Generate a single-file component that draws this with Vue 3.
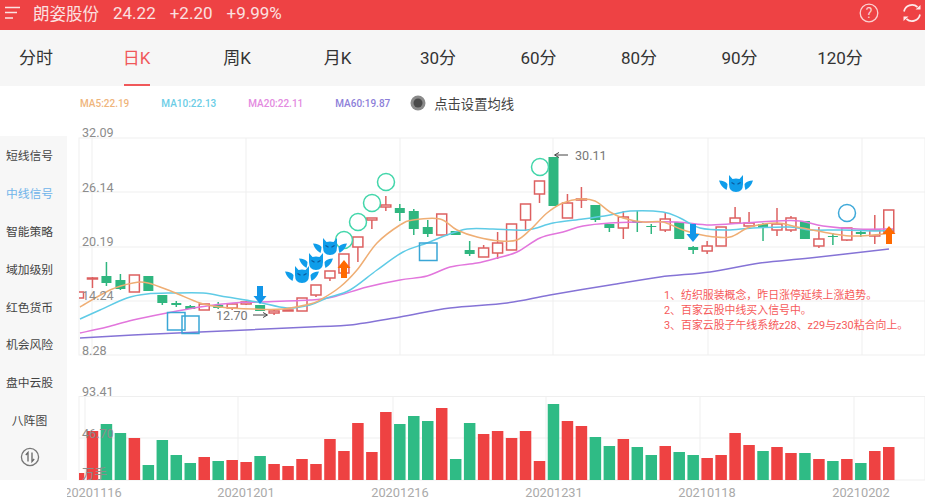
<template>
  <div class="page">
    <header class="topbar">
      <svg class="menu-icon" width="16" height="14" viewBox="0 0 16 14">
        <path d="M0 1.5h15M0 6.500h12M0 12h8" stroke="#fbe3e3" stroke-width="1.5" fill="none" />
      </svg>
      <span class="stock-name">朗姿股份</span>
      <span class="quote">24.22</span>
      <span class="quote">+2.20</span>
      <span class="quote">+9.99%</span>
      <div class="top-icons">
        <svg width="20" height="20" viewBox="0 0 20 20">
          <circle cx="10" cy="10" r="8.800" stroke="#fbd0d0" stroke-width="1.3" fill="none" />
          <text x="10" y="15" text-anchor="middle" class="help-mark">?</text>
        </svg>
        <svg width="20" height="20" viewBox="0 0 20 20">
          <path d="M2 8.500A8.200 8.200 0 0 1 15.500 4M18 11.500A8.200 8.200 0 0 1 4.500 16" stroke="#fdeaea" stroke-width="1.7" fill="none" />
          <path d="M13.500 6.500h5V2zM6.500 13.500h-5V18z" fill="#fdeaea" />
        </svg>
      </div>
    </header>

    <nav class="tabs">
      <div v-for="t in tabs" :key="t" class="tab" :class="{ active: t === '日K' }">{{ t }}</div>
    </nav>

    <div class="body">
      <aside class="side">
        <div v-for="s in sideItems" :key="s" class="side-item" :class="{ on: s === '中线信号' }">{{ s }}</div>
        <div class="side-item">
          <svg width="20" height="20" viewBox="0 0 20 20">
            <circle cx="10" cy="10" r="8.600" stroke="#777" stroke-width="1.300" fill="none" />
            <path d="M5.800 8 8 5.500V14.500M12 5.500V14.500L14.200 12" stroke="#666" stroke-width="1.300" fill="none" />
          </svg>
        </div>
      </aside>

      <main class="main">
        <div class="legend">
          <span v-for="m in maLegend" :key="m.text" class="ma" :style="{ color: m.color }">{{ m.text }}</span>
          <div class="ma-set">
            <svg width="16" height="16" viewBox="0 0 16 16">
              <circle cx="8" cy="8" r="7.500" fill="#8a8a8a" />
              <circle cx="8" cy="8" r="4.500" fill="#4a4a4a" />
            </svg>
            <span>点击设置均线</span>
          </div>
        </div>

        <svg class="chart" width="858" height="374" viewBox="67 126 858 374">
          <defs>
            <clipPath id="plot"><rect x="79" y="126" width="846" height="374" /></clipPath>
            <g id="devil">
              <path d="M-7-9-3.500-5Q0-6 3.500-5L7-9 7 0Q7 8 0 8-7 8-7 0Z" fill="#0f9dea" />
              <path d="M-8.500 0Q-11-3.500-17-3.500-15 3-9.500 6-8.500 3-8.500 0ZM8.500 0Q11-3.500 17-3.500 15 3 9.500 6 8.500 3 8.500 0Z" fill="#0f9dea" />
              <path d="M-4.500-1.500-1.500 0.300M4.500-1.500 1.500 0.300" stroke="#0c5a9c" stroke-width="1.200" />
            </g>
          </defs>

          <!-- grid -->
          <g class="grid">
            <rect x="79" y="138" width="846" height="217" />
            <line v-for="y in [192, 247, 301]" :key="y" x1="79" x2="925" :y1="y" :y2="y" />
            <line v-for="x in [92, 246, 400, 553, 708, 862]" :key="x" :x1="x" :x2="x" y1="138" y2="355" />
            <rect x="79" y="396.500" width="846" height="83.500" />
            <line x1="79" x2="925" y1="438" y2="438" />
            <line v-for="x in [85, 238, 393, 546, 700, 854]" :key="'v' + x" :x1="x" :x2="x" y1="396" y2="480" />
          </g>

          <!-- candles -->
          <g clip-path="url(#plot)">
            <g v-for="c in candles" :key="c.x">
              <line :x1="c.x" :x2="c.x" :y1="c.wt" :y2="c.wb" :stroke="c.up ? '#dd6060' : '#2fb67f'" stroke-width="1.5" />
              <rect v-if="c.up" :x="c.x - 5" :y="c.top" width="10" :height="c.h" class="up" />
              <rect v-else :x="c.x - 5" :y="c.top" width="10" :height="c.h" fill="#2fb67f" />
            </g>
            <rect v-for="b in bars" :key="'b' + b.x" :x="b.x" :y="480 - b.h" width="11.500" :height="b.h" :fill="b.up ? '#ee4242' : '#2fbb85'" />
          </g>

          <!-- moving averages -->
          <path v-for="l in maLines" :key="l.color" :d="l.d" :stroke="l.color" class="ma-line" />

          <!-- signals -->
          <circle v-for="p in greenRings" :key="p[0]" :cx="p[0]" :cy="p[1]" r="8.500" class="ring" />
          <circle cx="847" cy="213" r="8.500" class="ring blue" />
          <rect x="167.500" y="312.500" width="17.500" height="17.500" class="box" />
          <rect x="182" y="316" width="17" height="17.500" class="box" />
          <rect x="419.500" y="243" width="17.500" height="17.500" class="box" />
          <path v-for="a in downArrows" :key="a" :transform="`translate(${a[0]} ${a[1]})`" d="M-3 0H3V10H6.500L0 18-6.500 10H-3Z" fill="#1296e8" />
          <path v-for="a in upArrows" :key="a" :transform="`translate(${a[0]} ${a[1]})`" d="M-3 18H3V8H6.500L0 0-6.500 8H-3Z" fill="#ff6a00" />
          <use v-for="d in devils" :key="d[0]" href="#devil" :x="d[0]" :y="d[1]" />

          <!-- price marks -->
          <text x="216" y="320" class="axis dark">12.70</text>
          <path d="M253 315H267M263 312.500 267.500 315 263 317.500" class="pointer" />
          <path d="M555 155H568M559 152.500 554.500 155 559 157.500" class="pointer" />
          <text x="575" y="160" class="axis dark">30.11</text>

          <!-- axis labels -->
          <text v-for="a in axisLabels" :key="a[0]" x="82" :y="a[1]" class="axis">{{ a[0] }}</text>
          <text v-for="d in dates" :key="d[0]" :x="d[1]" y="497" text-anchor="middle" class="date">{{ d[0] }}</text>

          <!-- note -->
          <text v-for="n in notes" :key="n[0]" x="664" :y="n[1]" class="note">{{ n[0] }}</text>
        </svg>
      </main>
    </div>
  </div>
</template>

<script setup>
const tabs = ['分时', '日K', '周K', '月K', '30分', '60分', '80分', '90分', '120分']
const sideItems = ['短线信号', '中线信号', '智能策略', '域加级别', '红色货币', '机会风险', '盘中云股', '八阵图']

const maLegend = [
  { text: 'MA5:22.19', color: '#efb57c' },
  { text: 'MA10:22.13', color: '#6bcde6' },
  { text: 'MA20:22.11', color: '#e38ae0' },
  { text: 'MA60:19.87', color: '#8d80d9' }
]

const axisLabels = [['32.09', 137], ['26.14', 192], ['20.19', 246], ['14.24', 300], ['8.28', 355], ['93.41', 396], ['46.70', 438], ['万手', 478]]
const dates = [['20201116', 93], ['20201201', 246], ['20201216', 400], ['20201231', 554], ['20210118', 707], ['20210202', 861]]
const notes = [
  ['1、纺织服装概念\uFF0C昨日涨停延续上涨趋势。', 299],
  ['2、百家云股中线买入信号中。', 314],
  ['3、百家云股子午线系统z28、z29与z30粘合向上。', 329]
]

const greenRings = [[344, 240], [358, 222], [372, 203], [386, 182], [540, 167]]
const downArrows = [[260, 286], [693, 224]]
const upArrows = [[344, 260], [889, 226]]
const devils = [[302, 275], [316, 262], [330, 247], [736, 184]]

// top, bottom, wick top, wick bottom, u = red / d = green
const candleRows = [
  [292, 298, 292, 298, 'u'], [278, 279, 277, 288, 'u'], [276, 283, 262, 286, 'd'], [280, 289, 274, 290, 'd'],
  [275, 292, 275, 292, 'u'], [276, 291, 276, 291, 'd'], [295, 303, 295, 305, 'd'], [303, 305, 301, 307, 'd'],
  [306, 309, 305, 309, 'd'], [304, 310, 304, 310, 'u'], [305, 308, 302, 309, 'd'], [304, 308, 303, 310, 'u'],
  [302, 304, 301, 305, 'u'], [305, 311, 305, 311, 'd'], [311, 313, 309, 315, 'u'], [310, 311, 310, 311, 'u'],
  [298, 311, 298, 311, 'u'], [285, 295, 285, 297, 'u'], [271, 278, 271, 281, 'u'], [254, 273, 254, 273, 'u'],
  [237, 247, 237, 262, 'u'], [218, 220, 218, 229, 'u'], [205, 207, 196, 211, 'u'], [208, 213, 204, 221, 'd'],
  [211, 229, 209, 235, 'd'], [227, 234, 220, 237, 'd'], [214, 235, 214, 235, 'u'], [231, 235, 231, 235, 'd'],
  [250, 254, 241, 256, 'd'], [248, 257, 245, 257, 'u'], [243, 253, 232, 259, 'u'], [224, 250, 224, 250, 'u'],
  [204, 220, 204, 231, 'u'], [181, 194, 181, 203, 'u'], [157, 206, 157, 206, 'd'], [203, 218, 194, 218, 'u'],
  [199, 200, 187, 208, 'u'], [205, 220, 205, 222, 'd'], [224, 228, 224, 232, 'd'], [217, 228, 211, 239, 'u'],
  [221, 223, 211, 232, 'd'], [226, 227, 224, 234, 'd'], [219, 230, 213, 232, 'u'], [222, 239, 222, 239, 'd'],
  [247, 250, 246, 254, 'd'], [246, 251, 241, 254, 'u'], [227, 246, 227, 246, 'u'], [218, 223, 207, 223, 'u'],
  [223, 226, 212, 226, 'u'], [224, 227, 223, 241, 'd'], [224, 230, 208, 236, 'u'], [218, 230, 216, 232, 'u'],
  [221, 239, 221, 239, 'd'], [239, 246, 227, 248, 'u'], [236, 237, 233, 245, 'd'], [228, 240, 228, 241, 'u'],
  [232, 234, 231, 237, 'd'], [230, 236, 215, 244, 'u'], [210, 232, 210, 236, 'u']
]

const step = 13.97
const candles = candleRows.map((r, i) => ({
  x: 78.5 + step * i,
  top: r[0],
  h: r[1] - r[0],
  wt: r[2],
  wb: r[3],
  up: r[4] === 'u'
}))

const volRows = [
  [7, 1], [49, 1], [56, 0], [47, 0], [42, 1], [15, 0], [40, 0], [25, 0], [17, 0], [23, 1],
  [19, 0], [20, 1], [18, 1], [24, 0], [16, 1], [14, 1], [21, 1], [16, 1], [41, 1], [29, 1],
  [57, 1], [28, 1], [68, 1], [56, 0], [64, 0], [59, 0], [72, 1], [21, 0], [57, 0], [46, 1],
  [49, 1], [42, 1], [49, 1], [19, 1], [76, 0], [59, 1], [54, 1], [43, 0], [34, 0], [41, 1],
  [33, 0], [25, 0], [34, 1], [28, 0], [25, 0], [22, 1], [25, 1], [47, 1], [35, 1], [29, 0],
  [33, 1], [27, 1], [27, 0], [21, 1], [19, 0], [21, 1], [17, 0], [29, 1], [33, 1]
]
const bars = volRows.map((r, i) => ({ x: 72.75 + step * i, h: r[0], up: r[1] === 1 }))

// catmull-rom through the sampled points
const smooth = (pts) => {
  let d = `M${pts[0][0]} ${pts[0][1]}`
  for (let i = 0; i < pts.length - 1; i++) {
    const a = pts[i - 1] || pts[i]
    const b = pts[i]
    const c = pts[i + 1]
    const e = pts[i + 2] || c
    const c1 = [b[0] + (c[0] - a[0]) / 6, b[1] + (c[1] - a[1]) / 6]
    const c2 = [c[0] - (e[0] - b[0]) / 6, c[1] - (e[1] - b[1]) / 6]
    d += `C${c1[0].toFixed(1)} ${c1[1].toFixed(1)} ${c2[0].toFixed(1)} ${c2[1].toFixed(1)} ${c[0]} ${c[1]}`
  }
  return d
}

const maLines = [
  {
    color: '#8573d6',
    d: smooth([[80, 338], [133, 335], [200, 332], [310, 327], [350, 325], [400, 317], [450, 308], [507, 303], [550, 295], [610, 285], [660, 277], [710, 272], [760, 263], [810, 258], [889, 249]])
  },
  {
    color: '#e276dc',
    d: smooth([[80, 333], [107, 327], [133, 320], [167, 313], [200, 307], [233, 303], [260, 302], [310, 300], [333, 297], [367, 287], [400, 280], [427, 276], [450, 267], [477, 263], [497, 258], [517, 252], [540, 238], [563, 232], [583, 226], [610, 223], [643, 222], [677, 222], [710, 225], [743, 223], [777, 221], [800, 221], [823, 226], [857, 229], [893, 229]])
  },
  {
    color: '#5fcbe6',
    d: smooth([[80, 319], [100, 310], [127, 298], [147, 294], [173, 293], [203, 293], [227, 297], [257, 302], [287, 308], [310, 305], [327, 298], [350, 290], [377, 270], [403, 252], [427, 243], [447, 235], [467, 229], [493, 229], [527, 230], [553, 223], [583, 219], [610, 215], [630, 211], [663, 212], [680, 218], [700, 228], [727, 230], [753, 228], [790, 227], [810, 230], [843, 230], [877, 231], [893, 230]])
  },
  {
    color: '#efae74',
    d: smooth([[80, 307], [110, 290], [133, 283], [148, 283], [173, 292], [200, 303], [220, 307], [253, 309], [283, 309], [310, 304], [320, 300], [340, 287], [357, 270], [377, 243], [400, 225], [413, 220], [440, 219], [457, 230], [477, 237], [500, 241], [517, 240], [530, 230], [547, 213], [563, 203], [580, 199], [595, 201], [610, 212], [623, 218], [643, 222], [663, 222], [683, 230], [707, 236], [730, 237], [750, 227], [777, 223], [797, 227], [823, 232], [850, 236], [873, 235], [893, 233]])
  }
]
</script>

<style scoped>
.page {
  width: 925px;
  height: 500px;
  overflow: hidden;
  background: #fff;
  font-family: Roboto, "Noto Sans CJK SC", sans-serif;
}

.topbar {
  display: flex;
  align-items: center;
  height: 30px;
  padding: 0 3px 4px 5px;
  box-sizing: border-box;
  background: #ee4244;
  color: #fbe0e0;
}

.menu-icon {
  margin-right: 12px;
}

.stock-name {
  font-size: 16.5px;
  margin-right: 14px;
}

.quote {
  font-size: 17px;
  margin-right: 14px;
}

.top-icons {
  margin-left: auto;
  display: flex;
  gap: 23px;
}

.help-mark {
  font-size: 14px;
  fill: #fbd0d0;
}

.tabs {
  display: flex;
  justify-content: space-between;
  height: 56px;
  padding: 0 55px 0 6px;
  box-sizing: border-box;
  background: #f6f6f6;
}

.tab {
  position: relative;
  width: 60px;
  text-align: center;
  line-height: 57px;
  font-size: 17px;
  color: #333;
}

.tab.active {
  color: #f0585a;
}

.tab.active::after {
  content: "";
  position: absolute;
  left: 17px;
  bottom: 0;
  width: 26px;
  height: 2px;
  background: #f0585a;
}

.body {
  display: flex;
}

.side {
  width: 67px;
  height: 344px;
  margin-top: 50px;
  padding-right: 8px;
  box-sizing: border-box;
  background: #f7f7f7;
}

.side-item {
  height: 37.8px;
  display: flex;
  align-items: center;
  justify-content: center;
  font-size: 11.8px;
  color: #444;
}

.side-item.on {
  color: #6fb4ea;
}

.main {
  flex: 1;
  min-width: 0;
}

.legend {
  display: flex;
  align-items: center;
  gap: 32px;
  height: 40px;
  padding: 0 0 6px 13px;
  box-sizing: border-box;
}

.ma {
  font-size: 10px;
  font-weight: 500;
}

.ma-set {
  display: flex;
  align-items: center;
  gap: 8px;
  margin-left: -12px;
  font-size: 13.3px;
  color: #444;
}

.chart {
  display: block;
}

.grid rect,
.grid line {
  fill: none;
  stroke: #efefef;
  stroke-width: 1;
}

.up {
  fill: #fff;
  stroke: #dd6060;
  stroke-width: 1.5;
}

.ma-line {
  fill: none;
  stroke-width: 1.5;
}

.ring {
  fill: none;
  stroke: #42d6aa;
  stroke-width: 1.5;
}

.ring.blue {
  stroke: #3fa9d9;
}

.box {
  fill: none;
  stroke: #3aa6d6;
  stroke-width: 1.5;
}

.pointer {
  fill: none;
  stroke: #444;
  stroke-width: 1;
}

.axis {
  font-size: 12.6px;
  fill: #8c8c8c;
}

.axis.dark {
  fill: #777;
}

.date {
  font-size: 12.8px;
  fill: #aaa;
}

.note {
  font-size: 10.9px;
  fill: #f65a5a;
}
</style>
